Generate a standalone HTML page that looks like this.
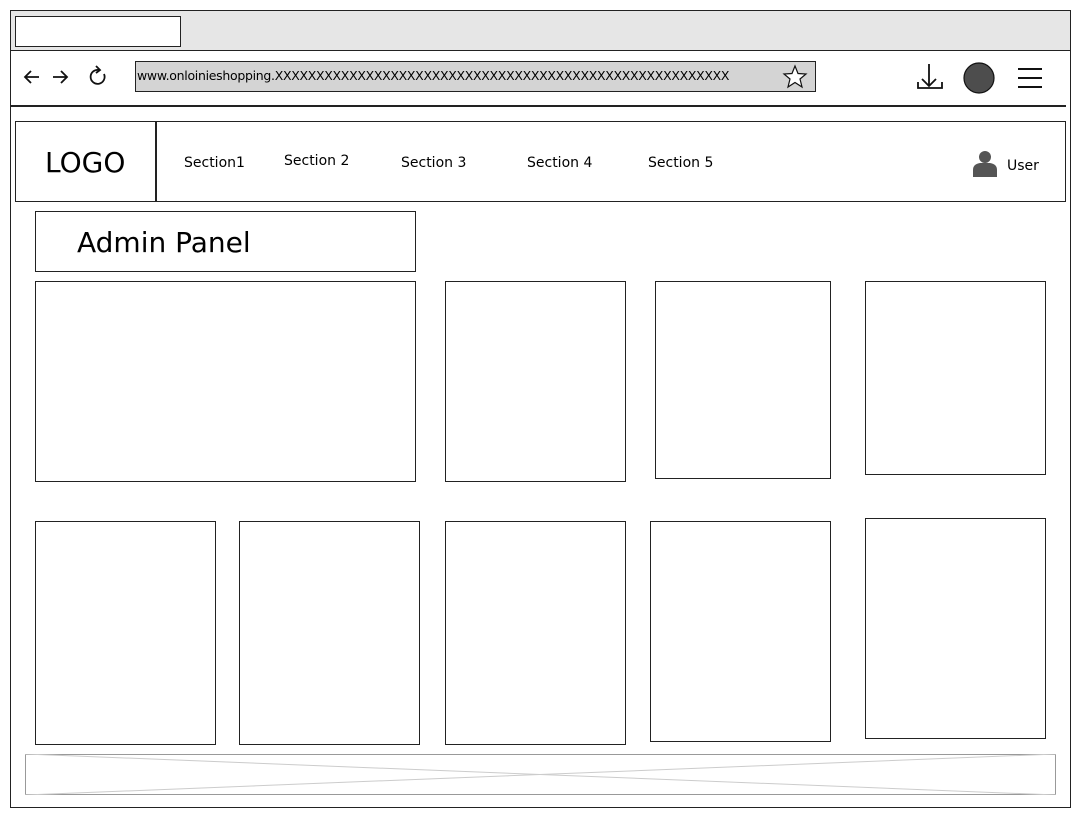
<!DOCTYPE html>
<html><head><meta charset="utf-8"><style>
body{margin:0;width:1081px;height:819px;background:#fff;position:relative;overflow:hidden;font-family:"DejaVu Sans","Liberation Sans",sans-serif;color:#000}
.b{position:absolute;border:1.5px solid #222;box-sizing:border-box;background:#fff}
.t{position:absolute;font-size:14px;white-space:nowrap}
</style></head><body>
<div class="b" style="left:10px;top:10px;width:1061px;height:798px"></div>
<div class="b" style="left:10px;top:10px;width:1061px;height:41px;background:#e6e6e6"></div>
<div class="b" style="left:15px;top:16px;width:166px;height:31px"></div>
<div style="position:absolute;left:10px;top:105px;width:1056px;height:1.5px;background:#222"></div>
<div class="b" style="left:135px;top:61px;width:681px;height:31px;background:#d4d4d4;border-width:1px"></div>
<div class="t" style="left:137px;top:68px;font-size:12.5px;letter-spacing:-0.3px">www.onloinieshopping.XXXXXXXXXXXXXXXXXXXXXXXXXXXXXXXXXXXXXXXXXXXXXXXXXXXXXXX</div>
<svg style="position:absolute;left:0;top:0" width="1081" height="120">
<g fill="none" stroke="#111" stroke-width="1.8">
<path d="M39 77H25M31 71l-6 6 6 6"/><path d="M53 77h14M61 71l6 6-6 6"/>
<path d="M99 70a7 7 0 1 0 5 4"/><path d="M96 66l4 4-4 3"/>
<path d="M929 64v21M922 79l7 7 7-7M918 82v6h24v-6"/>
<path d="M1018 69h24M1018 78h24M1018 87h24" stroke-width="2"/>
<path d="M795 66l3 7.5 8 .5-6 5 2 8-7-4.5-7 4.5 2-8-6-5 8-.5z" stroke-width="1.2" fill="#fff"/>
</g>
<circle cx="979" cy="78" r="15" fill="#4d4d4d" stroke="#111" stroke-width="1.2"/>
</svg>
<div class="b" style="left:15px;top:121px;width:1051px;height:81px"></div>
<div style="position:absolute;left:155px;top:121px;width:1.5px;height:81px;background:#222"></div>
<div class="t" style="left:45px;top:146px;font-size:28px">LOGO</div>
<div class="t" style="left:184px;top:155px">Section1</div>
<div class="t" style="left:284px;top:153px">Section 2</div>
<div class="t" style="left:401px;top:155px">Section 3</div>
<div class="t" style="left:527px;top:155px">Section 4</div>
<div class="t" style="left:648px;top:155px">Section 5</div>
<svg style="position:absolute;left:972px;top:149px" width="26" height="28"><circle cx="13" cy="8" r="6" fill="#555"/><path d="M1 28v-7q0-6 7-7h10q7 1 7 7v7z" fill="#555"/></svg>
<div class="t" style="left:1007px;top:158px">User</div>
<div class="b" style="left:35px;top:211px;width:381px;height:61px"></div>
<div class="t" style="left:77px;top:226px;font-size:28px">Admin Panel</div>
<div class="b" style="left:35px;top:281px;width:381px;height:201px"></div>
<div class="b" style="left:445px;top:281px;width:181px;height:201px"></div>
<div class="b" style="left:655px;top:281px;width:176px;height:198px"></div>
<div class="b" style="left:865px;top:281px;width:181px;height:194px"></div>
<div class="b" style="left:35px;top:521px;width:181px;height:224px"></div>
<div class="b" style="left:239px;top:521px;width:181px;height:224px"></div>
<div class="b" style="left:445px;top:521px;width:181px;height:224px"></div>
<div class="b" style="left:650px;top:521px;width:181px;height:221px"></div>
<div class="b" style="left:865px;top:518px;width:181px;height:221px"></div>
<div class="b" style="left:25px;top:754px;width:1031px;height:41px;border:1px solid #999"></div>
<svg style="position:absolute;left:25px;top:754px" width="1031" height="41"><path d="M0 0L1031 41M0 41L1031 0" stroke="#ccc" stroke-width="1"/></svg>
</body></html>
